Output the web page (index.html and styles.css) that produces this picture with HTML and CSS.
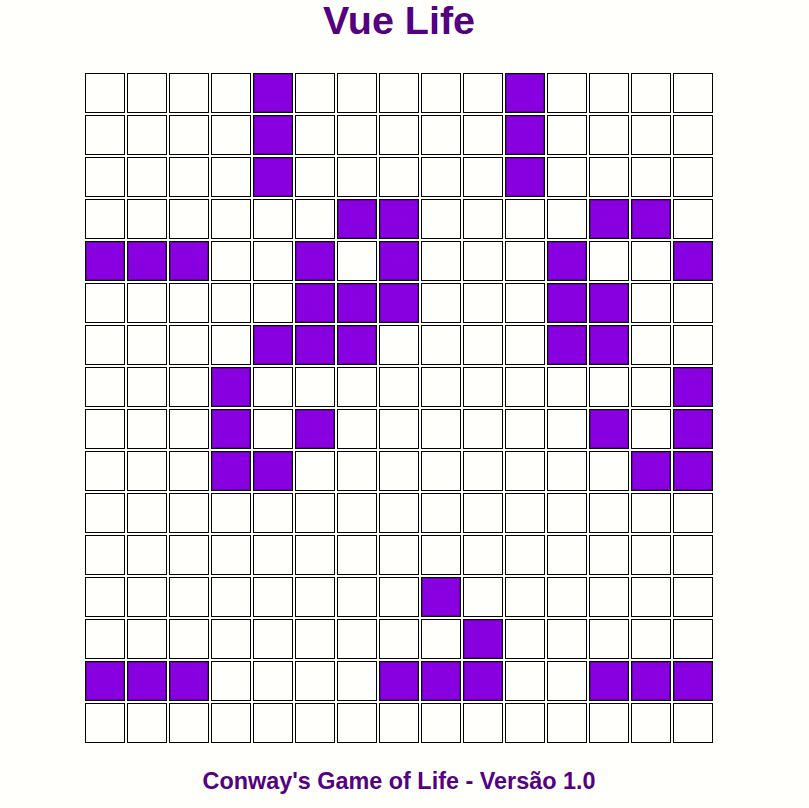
FILE: index.html
```html
<!DOCTYPE html>
<html lang="pt">
<head>
<meta charset="utf-8">
<title>Vue Life</title>
<link rel="stylesheet" href="styles.css">
</head>
<body>
<div class="app">
  <h1 class="title">Vue Life</h1>
  <div class="board">
    <div class="c"></div><div class="c"></div><div class="c"></div><div class="c"></div><div class="c a"></div><div class="c"></div><div class="c"></div><div class="c"></div><div class="c"></div><div class="c"></div><div class="c a"></div><div class="c"></div><div class="c"></div><div class="c"></div><div class="c"></div>
    <div class="c"></div><div class="c"></div><div class="c"></div><div class="c"></div><div class="c a"></div><div class="c"></div><div class="c"></div><div class="c"></div><div class="c"></div><div class="c"></div><div class="c a"></div><div class="c"></div><div class="c"></div><div class="c"></div><div class="c"></div>
    <div class="c"></div><div class="c"></div><div class="c"></div><div class="c"></div><div class="c a"></div><div class="c"></div><div class="c"></div><div class="c"></div><div class="c"></div><div class="c"></div><div class="c a"></div><div class="c"></div><div class="c"></div><div class="c"></div><div class="c"></div>
    <div class="c"></div><div class="c"></div><div class="c"></div><div class="c"></div><div class="c"></div><div class="c"></div><div class="c a"></div><div class="c a"></div><div class="c"></div><div class="c"></div><div class="c"></div><div class="c"></div><div class="c a"></div><div class="c a"></div><div class="c"></div>
    <div class="c a"></div><div class="c a"></div><div class="c a"></div><div class="c"></div><div class="c"></div><div class="c a"></div><div class="c"></div><div class="c a"></div><div class="c"></div><div class="c"></div><div class="c"></div><div class="c a"></div><div class="c"></div><div class="c"></div><div class="c a"></div>
    <div class="c"></div><div class="c"></div><div class="c"></div><div class="c"></div><div class="c"></div><div class="c a"></div><div class="c a"></div><div class="c a"></div><div class="c"></div><div class="c"></div><div class="c"></div><div class="c a"></div><div class="c a"></div><div class="c"></div><div class="c"></div>
    <div class="c"></div><div class="c"></div><div class="c"></div><div class="c"></div><div class="c a"></div><div class="c a"></div><div class="c a"></div><div class="c"></div><div class="c"></div><div class="c"></div><div class="c"></div><div class="c a"></div><div class="c a"></div><div class="c"></div><div class="c"></div>
    <div class="c"></div><div class="c"></div><div class="c"></div><div class="c a"></div><div class="c"></div><div class="c"></div><div class="c"></div><div class="c"></div><div class="c"></div><div class="c"></div><div class="c"></div><div class="c"></div><div class="c"></div><div class="c"></div><div class="c a"></div>
    <div class="c"></div><div class="c"></div><div class="c"></div><div class="c a"></div><div class="c"></div><div class="c a"></div><div class="c"></div><div class="c"></div><div class="c"></div><div class="c"></div><div class="c"></div><div class="c"></div><div class="c a"></div><div class="c"></div><div class="c a"></div>
    <div class="c"></div><div class="c"></div><div class="c"></div><div class="c a"></div><div class="c a"></div><div class="c"></div><div class="c"></div><div class="c"></div><div class="c"></div><div class="c"></div><div class="c"></div><div class="c"></div><div class="c"></div><div class="c a"></div><div class="c a"></div>
    <div class="c"></div><div class="c"></div><div class="c"></div><div class="c"></div><div class="c"></div><div class="c"></div><div class="c"></div><div class="c"></div><div class="c"></div><div class="c"></div><div class="c"></div><div class="c"></div><div class="c"></div><div class="c"></div><div class="c"></div>
    <div class="c"></div><div class="c"></div><div class="c"></div><div class="c"></div><div class="c"></div><div class="c"></div><div class="c"></div><div class="c"></div><div class="c"></div><div class="c"></div><div class="c"></div><div class="c"></div><div class="c"></div><div class="c"></div><div class="c"></div>
    <div class="c"></div><div class="c"></div><div class="c"></div><div class="c"></div><div class="c"></div><div class="c"></div><div class="c"></div><div class="c"></div><div class="c a"></div><div class="c"></div><div class="c"></div><div class="c"></div><div class="c"></div><div class="c"></div><div class="c"></div>
    <div class="c"></div><div class="c"></div><div class="c"></div><div class="c"></div><div class="c"></div><div class="c"></div><div class="c"></div><div class="c"></div><div class="c"></div><div class="c a"></div><div class="c"></div><div class="c"></div><div class="c"></div><div class="c"></div><div class="c"></div>
    <div class="c a"></div><div class="c a"></div><div class="c a"></div><div class="c"></div><div class="c"></div><div class="c"></div><div class="c"></div><div class="c a"></div><div class="c a"></div><div class="c a"></div><div class="c"></div><div class="c"></div><div class="c a"></div><div class="c a"></div><div class="c a"></div>
    <div class="c"></div><div class="c"></div><div class="c"></div><div class="c"></div><div class="c"></div><div class="c"></div><div class="c"></div><div class="c"></div><div class="c"></div><div class="c"></div><div class="c"></div><div class="c"></div><div class="c"></div><div class="c"></div><div class="c"></div>
  </div>
  <p class="footer">Conway's Game of Life - Versão 1.0</p>
</div>
</body>
</html>
```

FILE: styles.css
```css
html, body {
  margin: 0;
  padding: 0;
  background: #fffffb;
}

.app {
  width: 798px;
  display: flex;
  flex-direction: column;
  align-items: center;
  font-family: "Liberation Sans", Arial, sans-serif;
  color: #550080;
}

.title {
  margin: 0;
  font-size: 39.5px;
  line-height: 40px;
  font-weight: bold;
}

.board {
  margin-top: 33px;
  display: grid;
  grid-template-columns: repeat(15, 40px);
  grid-auto-rows: 40px;
  gap: 2px;
}

.c {
  box-sizing: border-box;
  border: 1px solid #000;
  background: #fffffb;
}

.c.a {
  background: #8800e0;
  box-shadow: inset 0 0 0 1px #6a00b0;
}

.footer {
  margin: 25px 0 0;
  font-size: 23.4px;
  line-height: 26px;
  font-weight: bold;
}
```
